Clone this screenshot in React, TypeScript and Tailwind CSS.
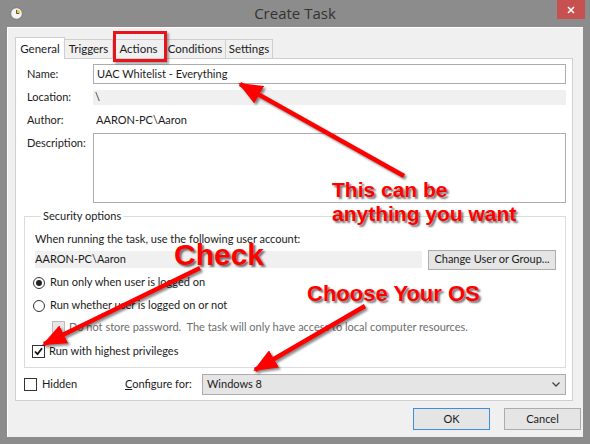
import React from "react";

const Radio = ({ checked }: { checked?: boolean }) => (
  <div className="w-[12px] h-[12px] rounded-full border border-[#333] bg-white flex items-center justify-center">
    {checked && <div className="w-[6px] h-[6px] rounded-full bg-[#222]" />}
  </div>
);

const Check = ({ checked, disabled }: { checked?: boolean; disabled?: boolean }) => (
  <div
    className={
      disabled
        ? "w-[13px] h-[13px] border border-[#bcbcbc] bg-[#e6e6e6]"
        : "w-[13px] h-[13px] border border-[#333] bg-white flex items-center justify-center"
    }
  >
    {checked && (
      <svg width="9" height="9" viewBox="0 0 9 9">
        <path d="M1 4.5 L3.5 7.2 L8 1.2" fill="none" stroke="#111" strokeWidth="1.8" />
      </svg>
    )}
  </div>
);

const Tab = ({ label, w, active }: { label: string; w: string; active?: boolean }) => (
  <div
    className={
      (active
        ? "h-[22px] bg-white border border-b-0 border-[#d0d0d0] z-10 relative"
        : "h-[20px] bg-[#f0f0f0] border border-[#cfcfcf] -ml-px") +
      " flex items-center justify-center " +
      w
    }
  >
    {label}
  </div>
);

export default function App() {
  return (
    <div className="relative w-[590px] h-[444px] overflow-hidden bg-[#8c8c8c] font-['Lato','Open_Sans',sans-serif] text-[11px] text-[#1b1b1b]">
      {/* title bar */}
      <div className="h-[27px] flex items-start">
        <div className="w-[40px] pl-[10px] pt-[7px]">
          <svg width="13" height="13" viewBox="0 0 13 13">
            <circle cx="6.5" cy="6.5" r="5.8" fill="#f4f4f4" stroke="#7a7a7a" />
            <path d="M6.5 6.5 L6.5 2.5 A4 4 0 0 1 10.5 6.5 Z" fill="#f1c94a" />
            <path d="M6.5 3 V6.5 H9.2" fill="none" stroke="#555" strokeWidth="1" />
          </svg>
        </div>
        <div className="flex-1 text-center pt-[4px] font-['Open_Sans',sans-serif] text-[15px] text-[#333] leading-[18px]">
          Create Task
        </div>
        <div className="w-[40px] flex justify-end">
          <div className="w-[28px] h-[19px] mr-[5px] bg-[#c75050] flex items-center justify-center">
            <svg width="8" height="8" viewBox="0 0 8 8">
              <path d="M1 1 L7 7 M7 1 L1 7" stroke="#fff" strokeWidth="1.6" />
            </svg>
          </div>
        </div>
      </div>

      {/* client */}
      <div className="mx-[7px] h-[410px] bg-[#f0f0f0] border-t border-l border-white pt-[9px] pl-[7px]">
        <div className="flex items-end h-[22px] text-[11.5px]">
          <Tab label="General" w="w-[50px]" active />
          <Tab label="Triggers" w="w-[49px]" />
          <Tab label="Actions" w="w-[53px]" />
          <Tab label="Conditions" w="w-[62px]" />
          <Tab label="Settings" w="w-[48px]" />
        </div>

        <div className="w-[558px] h-[343px] -mt-px bg-white border border-[#d0d0d0] pl-[11px] pr-[6px] pt-[5px] flex flex-col">
          <div className="flex items-center h-[20px]">
            <div className="w-[66px]">Name:</div>
            <div className="flex-1 h-[20px] border border-[#acacac] bg-white flex items-center px-[3px]">
              UAC Whitelist - Everything
            </div>
          </div>
          <div className="flex items-center h-[15px] mt-[6px]">
            <div className="w-[66px]">Location:</div>
            <div className="flex-1 h-[15px] bg-[#f0f0f0] flex items-center px-[2px]">\</div>
          </div>
          <div className="flex items-center h-[16px] mt-[7px]">
            <div className="w-[66px]">Author:</div>
            <div className="flex-1 px-[3px]">AARON-PC\Aaron</div>
          </div>
          <div className="flex items-start h-[70px] mt-[5px]">
            <div className="w-[66px] pt-[2px]">Description:</div>
            <div className="flex-1 h-[70px] border border-[#acacac] bg-white" />
          </div>

          <fieldset className="mt-[5px] -ml-[3px] border border-[#dcdcdc] pl-[10px] pr-[9px] h-[160px]">
            <legend className="ml-[6px] px-[2px]">Security options</legend>
            <div className="h-[16px] flex items-center mt-[7px]">
              When running the task, use the following user account:
            </div>
            <div className="flex items-center mt-[1px] h-[22px]">
              <div className="w-[387px] h-[17px] bg-[#f0f0f0] flex items-center">AARON-PC\Aaron</div>
              <div className="ml-[6px] w-[128px] h-[20px] bg-[#e5e5e5] border border-[#acacac] flex items-center justify-center whitespace-nowrap">
                Change User or Group...
              </div>
            </div>
            <div className="flex items-center gap-[5px] h-[16px] mt-[4px] -ml-[2px]">
              <Radio checked />
              <span>Run only when user is logged on</span>
            </div>
            <div className="flex items-center gap-[5px] h-[16px] mt-[7px] -ml-[2px]">
              <Radio />
              <span>Run whether user is logged on or not</span>
            </div>
            <div className="flex items-center gap-[4px] h-[16px] mt-[6px] ml-[17px] text-[#6d6d6d]">
              <Check disabled />
              <span>Do not store password.&nbsp; The task will only have access to local computer resources.</span>
            </div>
            <div className="flex items-center gap-[4px] h-[16px] mt-[8px] -ml-[3px]">
              <Check checked />
              <span>Run with highest privileges</span>
            </div>
          </fieldset>

          <div className="flex items-center h-[21px] mt-[6px] -ml-[3px]">
            <Check />
            <span className="ml-[5px] w-[83px]">Hidden</span>
            <span className="w-[77px]">
              <span className="underline">C</span>onfigure for:
            </span>
            <div className="flex-1 h-[21px] bg-[#e5e5e5] border border-[#acacac] flex items-center justify-between pl-[4px] pr-[5px]">
              <span>Windows 8</span>
              <svg width="8" height="5" viewBox="0 0 8 5">
                <path d="M0.5 0.5 L4 4 L7.5 0.5" fill="none" stroke="#444" strokeWidth="1.3" />
              </svg>
            </div>
          </div>
        </div>

        <div className="flex justify-end gap-[14px] mt-[7px] pr-[2px]">
          <div className="w-[77px] h-[22px] bg-[#e5e5e5] border border-[#3c8fe0] flex items-center justify-center">OK</div>
          <div className="w-[77px] h-[22px] bg-[#e5e5e5] border border-[#acacac] flex items-center justify-center">Cancel</div>
        </div>
      </div>

      {/* annotation overlay */}
      <div className="absolute left-[113px] top-[31px] w-[54px] h-[31px] border-[3px] border-[#e8141c] shadow-[2px_2px_2px_rgba(0,0,0,0.35)]" />
      <svg
        className="absolute inset-0 pointer-events-none drop-shadow-[2px_2px_1px_rgba(0,0,0,0.45)]"
        width="590"
        height="444"
      >
        <defs>
          <marker id="ah" markerUnits="userSpaceOnUse" markerWidth="24" markerHeight="20" refX="22" refY="10" orient="auto">
            <path d="M0 0 L24 10 L0 20 Z" fill="#ff0000" />
          </marker>
        </defs>
        <line x1="404" y1="176" x2="240" y2="84" stroke="#ff0000" strokeWidth="4.5" markerEnd="url(#ah)" />
        <line x1="200" y1="268" x2="44" y2="344" stroke="#ff0000" strokeWidth="4.5" markerEnd="url(#ah)" />
        <line x1="365" y1="306" x2="255" y2="370" stroke="#ff0000" strokeWidth="4.5" markerEnd="url(#ah)" />
      </svg>
      <div className="absolute left-[332px] top-[178px] font-['Liberation_Sans',Arial,sans-serif] font-bold text-[21px] leading-[24px] text-[#ff0000] [text-shadow:2px_2px_2px_rgba(0,0,0,0.55)]">
        This can be
        <br />
        anything you want
      </div>
      <div className="absolute left-[174px] top-[238px] font-['Liberation_Sans',Arial,sans-serif] font-bold text-[30px] leading-[34px] text-[#ff0000] [text-shadow:2px_2px_2px_rgba(0,0,0,0.55)]">
        Check
      </div>
      <div className="absolute left-[307px] top-[282px] font-['Liberation_Sans',Arial,sans-serif] font-bold text-[22px] leading-[24px] text-[#ff0000] [text-shadow:2px_2px_2px_rgba(0,0,0,0.55)]">
        Choose Your OS
      </div>
    </div>
  );
}
